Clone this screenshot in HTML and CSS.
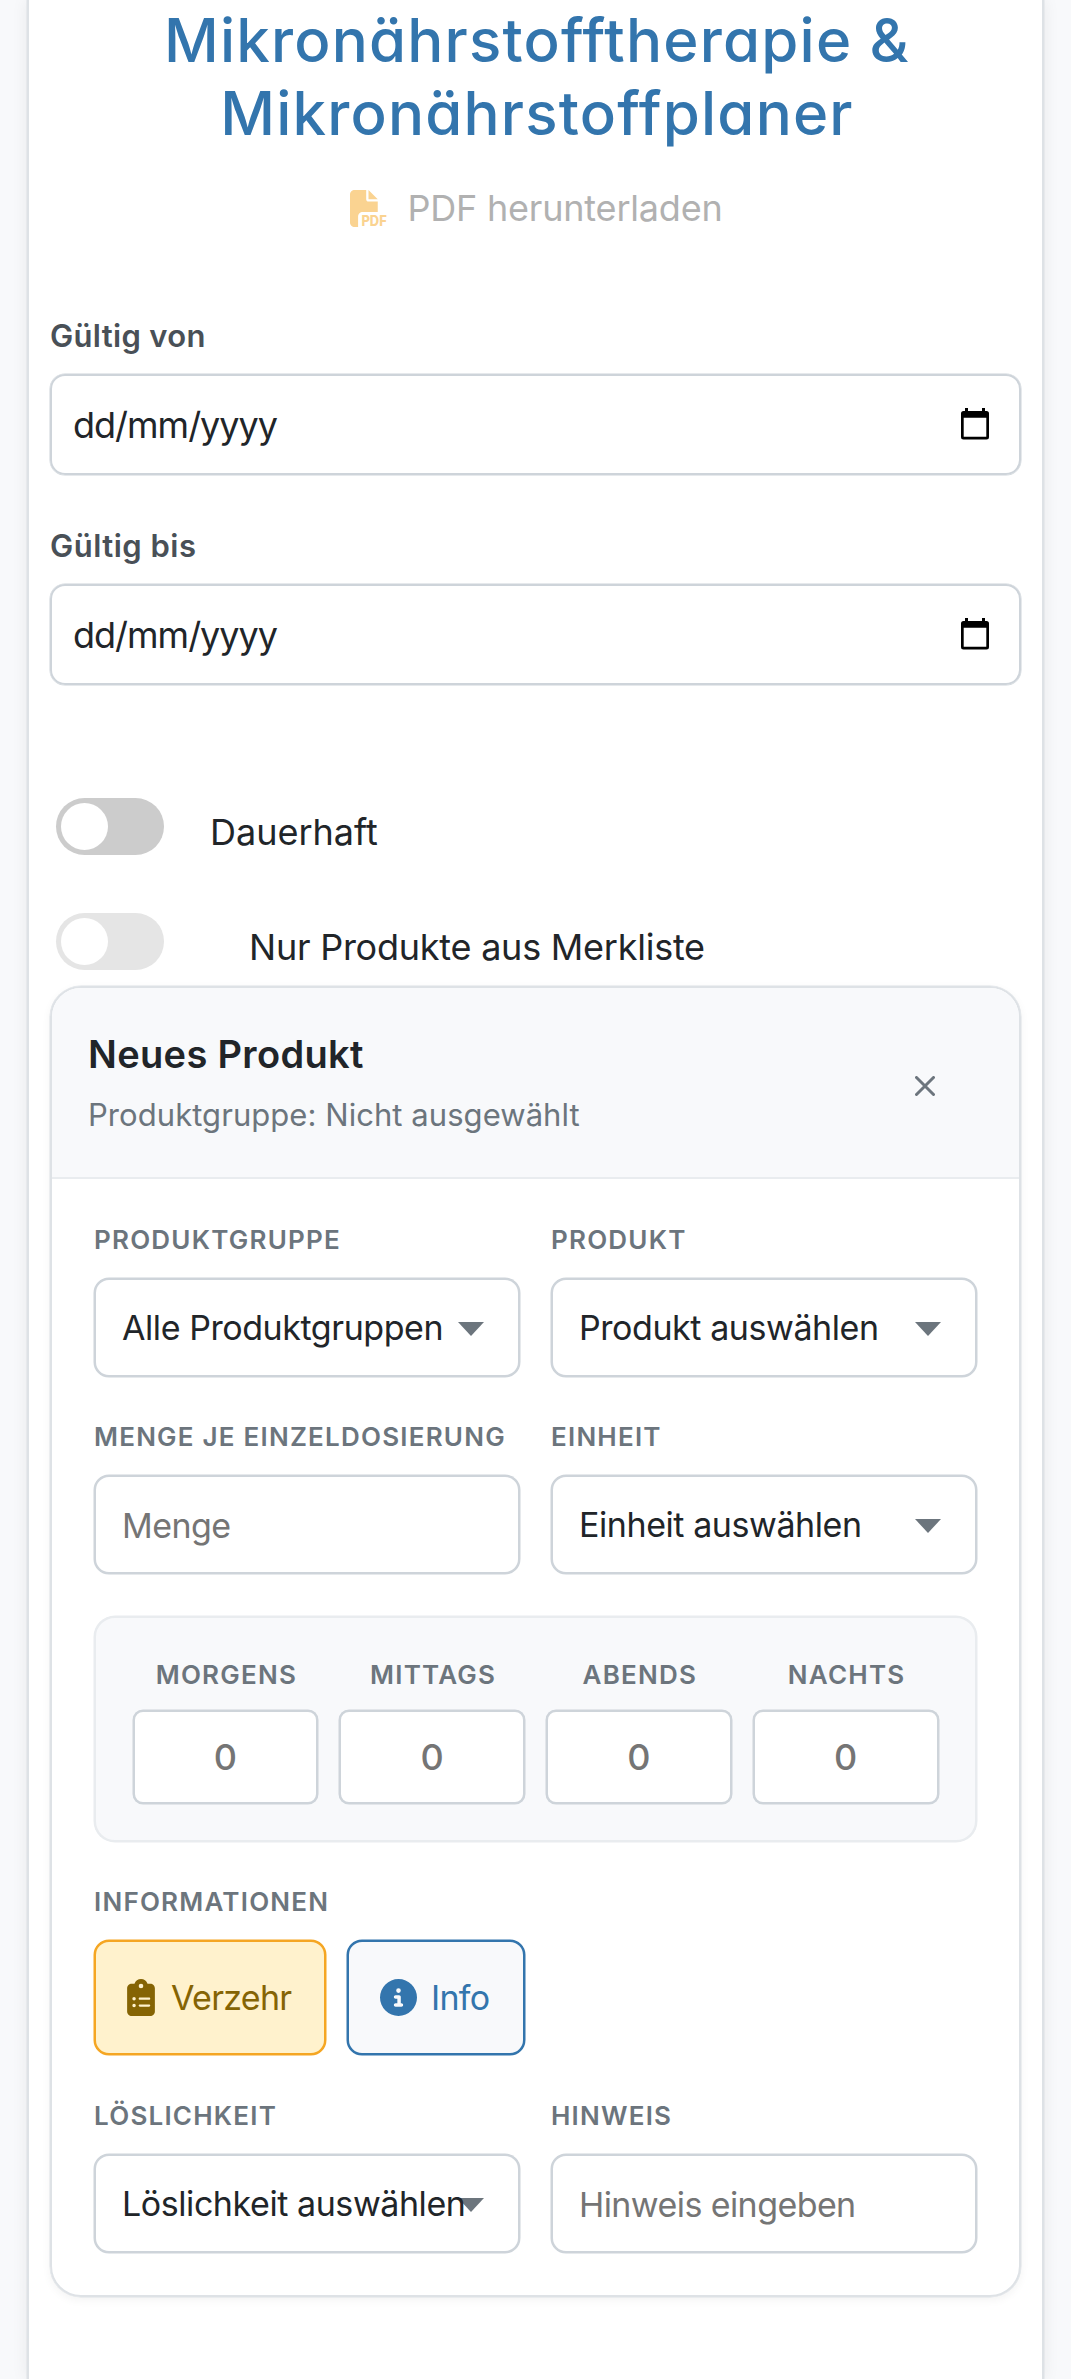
FILE: index.html
```
<!DOCTYPE html>
<html lang="de">
<head>
<meta charset="utf-8">
<title>Mikronährstoffplaner</title>
<link rel="stylesheet" href="styles.css">
</head>
<body>
<main class="planner">
  <h1 class="title">Mikronährstofftherapie &amp; Mikronährstoffplaner</h1>

  <div class="download">
    <svg class="download-icon" viewBox="0 0 512 512" aria-hidden="true">
      <path fill="currentColor" d="M0 64C0 28.7 28.7 0 64 0L224 0l0 128c0 17.7 14.3 32 32 32l128 0 0 144-208 0c-35.3 0-64 28.7-64 64l0 144-48 0c-35.3 0-64-28.7-64-64L0 64zm384 64l-128 0L256 0 384 128z"/>
      <text class="download-type" x="158" y="504" textLength="350" lengthAdjust="spacingAndGlyphs">PDF</text>
    </svg>
    <span>PDF herunterladen</span>
  </div>

  <div class="date-field">
    <span class="date-label">Gültig von</span>
    <div class="date-input">
      <span>dd/mm/yyyy</span>
      <svg class="calendar" viewBox="0 0 28 32" aria-hidden="true"><path fill-rule="evenodd" d="M4 0h3v3h14V0h3v3h1.5A2.5 2.5 0 0 1 28 5.500v23.500a2.500 2.500 0 0 1-2.500 2.500h-23A2.500 2.500 0 0 1 0 29V5.500A2.500 2.500 0 0 1 2.500 3H4zM2.700 9.700v19h22.600v-19z"/></svg>
    </div>
  </div>
  <div class="date-field">
    <span class="date-label bis">Gültig bis</span>
    <div class="date-input">
      <span>dd/mm/yyyy</span>
      <svg class="calendar" viewBox="0 0 28 32" aria-hidden="true"><path fill-rule="evenodd" d="M4 0h3v3h14V0h3v3h1.5A2.5 2.5 0 0 1 28 5.500v23.500a2.500 2.500 0 0 1-2.500 2.500h-23A2.500 2.500 0 0 1 0 29V5.500A2.500 2.500 0 0 1 2.500 3H4zM2.700 9.700v19h22.600v-19z"/></svg>
    </div>
  </div>

  <div class="switches">
    <div class="switch-row">
      <span class="switch"></span>
      <span class="switch-text">Dauerhaft</span>
    </div>
    <div class="switch-row switch-row-wide">
      <span class="switch switch-disabled"></span>
      <span class="switch-text">Nur Produkte aus Merkliste</span>
    </div>
  </div>

  <section class="card">
    <header class="card-header">
      <div>
        <h2 class="card-title">Neues Produkt</h2>
        <p class="card-subtitle">Produktgruppe: Nicht ausgewählt</p>
      </div>
      <svg class="close" viewBox="0 0 20 20" aria-label="Schließen"><path d="M1.500 1.500l17 17M18.500 1.500l-17 17"/></svg>
    </header>

    <div class="card-body">
      <div class="field">
        <span class="label">PRODUKTGRUPPE</span>
        <div class="control"><span class="value">Alle Produktgruppen</span><i class="arrow"></i></div>
      </div>
      <div class="field">
        <span class="label">PRODUKT</span>
        <div class="control"><span class="value">Produkt auswählen</span><i class="arrow"></i></div>
      </div>
      <div class="field">
        <span class="label">MENGE JE EINZELDOSIERUNG</span>
        <input class="control" type="text" placeholder="Menge">
      </div>
      <div class="field">
        <span class="label">EINHEIT</span>
        <div class="control"><span class="value">Einheit auswählen</span><i class="arrow"></i></div>
      </div>

      <div class="doses">
        <div class="dose"><span class="label">MORGENS</span><input class="dose-input" type="text" placeholder="0"></div>
        <div class="dose"><span class="label">MITTAGS</span><input class="dose-input" type="text" placeholder="0"></div>
        <div class="dose"><span class="label">ABENDS</span><input class="dose-input" type="text" placeholder="0"></div>
        <div class="dose"><span class="label">NACHTS</span><input class="dose-input" type="text" placeholder="0"></div>
      </div>

      <div class="field field-full">
        <span class="label">INFORMATIONEN</span>
        <div class="buttons">
          <button class="btn btn-intake" type="button">
            <svg class="clipboard" viewBox="0 0 384 512" aria-hidden="true"><path fill="currentColor" d="M192 0c-41.800 0-77.400 26.700-90.500 64L64 64C28.700 64 0 92.700 0 128L0 448c0 35.300 28.700 64 64 64l256 0c35.300 0 64-28.700 64-64l0-320c0-35.300-28.700-64-64-64l-37.500 0C269.400 26.700 233.800 0 192 0zm0 64a32 32 0 1 1 0 64 32 32 0 1 1 0-64zM72 272a24 24 0 1 1 48 0 24 24 0 1 1-48 0zm104-16l128 0c8.800 0 16 7.200 16 16s-7.200 16-16 16l-128 0c-8.800 0-16-7.200-16-16s7.200-16 16-16zM72 368a24 24 0 1 1 48 0 24 24 0 1 1-48 0zm88 0c0-8.800 7.200-16 16-16l128 0c8.800 0 16 7.200 16 16s-7.200 16-16 16l-128 0c-8.800 0-16-7.200-16-16z"/></svg>
            <span>Verzehr</span>
          </button>
          <button class="btn btn-info" type="button">
            <svg class="info" viewBox="0 0 512 512" aria-hidden="true"><path fill="currentColor" d="M256 512A256 256 0 1 0 256 0a256 256 0 1 0 0 512zM216 336l24 0 0-64-24 0c-13.300 0-24-10.700-24-24s10.700-24 24-24l48 0c13.300 0 24 10.700 24 24l0 88 8 0c13.300 0 24 10.700 24 24s-10.700 24-24 24l-80 0c-13.300 0-24-10.700-24-24s10.700-24 24-24zm40-208a32 32 0 1 1 0 64 32 32 0 1 1 0-64z"/></svg>
            <span>Info</span>
          </button>
        </div>
      </div>

      <div class="field">
        <span class="label">LÖSLICHKEIT</span>
        <div class="control"><span class="value">Löslichkeit auswählen</span><i class="arrow"></i></div>
      </div>
      <div class="field">
        <span class="label">HINWEIS</span>
        <input class="control" type="text" placeholder="Hinweis eingeben">
      </div>
    </div>
  </section>
</main>
</body>
</html>
```
FILE: styles.css
```
* { box-sizing: border-box; margin: 0; }

body {
  background: #f8f9fb;
  color: #212529;
  font-family: Inter, "Liberation Sans", sans-serif;
  height: 2379px;
  overflow: hidden;
}

.planner {
  width: 1017px;
  height: 2379px;
  margin-left: 27px;
  padding: 4px 21px 0;
  background: #fff;
  border: solid #dee2e6;
  border-width: 0 2px;
  box-shadow: 0 0 0 .5px #dee2e6, 0 0 16px rgba(0, 0, 0, .07);
}

.title {
  width: 800px;
  margin: 0 auto;
  padding-left: 3px;
  color: #3375ad;
  font-size: 60px;
  font-weight: 450;
  font-feature-settings: "cv11";
  letter-spacing: 1.200px;
  line-height: 73px;
  text-align: center;
}

.download {
  display: flex;
  align-items: center;
  justify-content: center;
  gap: 20px;
  height: 40px;
  margin-top: 38px;
  padding-left: 2px;
  color: #b1b1b1;
  font-size: 36px;
  letter-spacing: -.200px;
}
.download-icon { width: 37px; height: 37px; overflow: visible; color: #fad391; }
.download-type { fill: #fad391; font-weight: 800; font-size: 195px; letter-spacing: 0; }

.date-field { margin-top: 51px; }
.download + .date-field { margin-top: 88px; }
.date-label {
  display: block;
  margin-bottom: 18px;
  color: #495057;
  font-size: 31px;
  font-weight: 600;
  line-height: 40px;
  letter-spacing: .330px;
}
.date-label.bis { letter-spacing: .500px; }
.date-input {
  display: flex;
  align-items: center;
  justify-content: space-between;
  height: 101px;
  padding: 0 30px 0 21px;
  border: 2px solid #ced4da;
  border-radius: 15px;
  box-shadow: 0 0 0 .5px #ced4da;
  font-size: 36px;
  letter-spacing: -1.000px;
}
.calendar { width: 28px; height: 32px; margin-top: -1px; }

.switches {
  display: flex;
  flex-direction: column;
  gap: 57.500px;
  margin: 113px 0 16.500px 6px;
}
.switch-row { display: flex; gap: 46px; height: 57px; }
.switch-row-wide { gap: 85px; }
.switch {
  width: 108px;
  height: 57px;
  padding: 5px;
  border-radius: 29px;
  background: #ccc;
}
.switch::before {
  content: "";
  display: block;
  width: 47px;
  height: 47px;
  border-radius: 50%;
  background: #fff;
}
.switch-disabled { background: #e5e5e5; }
.switch-text { font-size: 36px; line-height: 69px; letter-spacing: -.020px; }
.switch-row-wide .switch-text { letter-spacing: -.240px; }

.card {
  border: 2px solid #dee2e6;
  border-radius: 31px;
  overflow: hidden;
  box-shadow: 0 0 0 .5px #dee2e6, 0 3px 10px rgba(0, 0, 0, .05);
}
.card-header {
  display: flex;
  align-items: center;
  justify-content: space-between;
  height: 191px;
  padding: 0 84px 0 36px;
  background: #f8f9fb;
  border-bottom: 2px solid #e9ecef;
}
.card-title {
  margin-top: -1px;
  font-size: 38px;
  font-weight: 600;
  line-height: 48px;
  letter-spacing: .330px;
}
.card-subtitle {
  margin-top: 17px;
  color: #6c757d;
  font-size: 31px;
  line-height: 40px;
  letter-spacing: .055px;
}
.close {
  width: 20px;
  height: 20px;
  margin-top: 6px;
  fill: none;
  stroke: #6c757d;
  stroke-width: 3;
  stroke-linecap: round;
}

.card-body {
  display: grid;
  grid-template-columns: 1fr 1fr;
  column-gap: 31px;
  row-gap: 44.500px;
  padding: 44.500px 42px 42px;
}
.field { display: flex; flex-direction: column; gap: 22px; min-width: 0; }
.field-full { grid-column: 1 / -1; }
.label {
  color: #6c757d;
  font-size: 26px;
  font-weight: 600;
  line-height: 32px;
  letter-spacing: 1.220px;
  white-space: nowrap;
}
.control {
  display: flex;
  align-items: center;
  width: 100%;
  height: 99px;
  padding: 0 34px 0 26px;
  background: #fff;
  border: 2px solid #ced4da;
  border-radius: 15px;
  box-shadow: 0 0 0 .5px #ced4da;
  font-family: inherit;
  font-size: 34px;
  letter-spacing: -.430px;
}
input.control { padding-top: 2px; letter-spacing: -.580px; }
input::placeholder { color: #757575; opacity: 1; }
.value {
  z-index: 1;
  flex: 1;
  width: 0;
  white-space: nowrap;
}
.arrow {
  border: solid transparent;
  border-width: 14px 13px 0;
  border-top-color: #6c757d;
  margin-top: 3px;
}

.doses {
  grid-column: 1 / -1;
  display: grid;
  grid-template-columns: repeat(4, 1fr);
  gap: 21px;
  height: 226px;
  margin-top: -3px;
  padding: 41px 36.500px 0;
  background: #f8f9fb;
  border: 2px solid #e9ecef;
  border-radius: 21px;
  box-shadow: 0 0 0 .5px #e9ecef;
}
.dose {
  display: flex;
  flex-direction: column;
  align-items: center;
  gap: 19px;
  min-width: 0;
}
.dose .label { padding-left: 2px; }
.dose-input {
  width: 100%;
  height: 94px;
  padding: 0;
  background: #fff;
  border: 2px solid #ced4da;
  border-radius: 10px;
  box-shadow: 0 0 0 .5px #ced4da;
  font: 500 36px Inter, "Liberation Sans", sans-serif;
  text-align: center;
}

.buttons { display: flex; gap: 21px; }
.btn {
  display: flex;
  align-items: center;
  height: 115px;
  border: 2px solid;
  border-radius: 15px;
  box-shadow: 0 0 0 .5px currentColor;
  font: 400 34px Inter, "Liberation Sans", sans-serif;
  letter-spacing: -.700px;
}
.btn-intake {
  gap: 16px;
  width: 232px;
  padding: 0 0 0 31px;
  background: #fff2cd;
  border-color: #f5a623;
  box-shadow: 0 0 0 .5px #f5a623;
  color: #856404;
}
.btn-info {
  gap: 14px;
  width: 178px;
  padding: 0 0 0 31px;
  background: #f8f9fb;
  border-color: #3375ad;
  color: #3375ad;
}
.clipboard { width: 28px; height: 37px; }
.info { width: 37px; height: 37px; }
```
